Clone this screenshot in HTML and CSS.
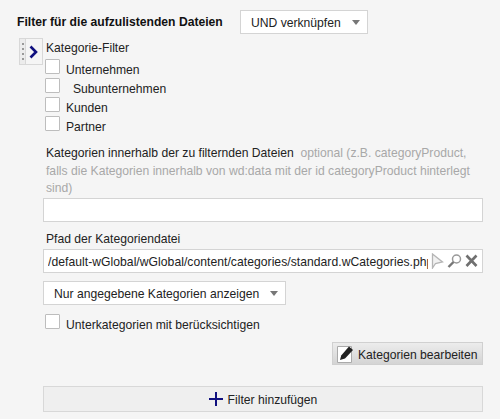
FILE: index.html
```html
<!DOCTYPE html>
<html lang="de">
<head>
<meta charset="utf-8">
<title>Filter</title>
<link rel="stylesheet" href="styles.css">
</head>
<body>
<div class="page">
  <div class="head">
    <strong class="head-title">Filter für die aufzulistenden Dateien</strong>
    <div class="select select-und"><span>UND verknüpfen</span><i class="caret"></i></div>
  </div>
  <div class="filter">
    <div class="handle">
      <div class="grip"><b></b><b></b><b></b><b></b></div>
      <div class="toggle"><svg width="10" height="14" viewBox="0 0 10 14"><path d="M1.500 1.500 7 7l-5.500 5.500" fill="none" stroke="#10107f" stroke-width="2.600"/></svg></div>
    </div>
    <div class="cats">
      <div class="cats-title">Kategorie-Filter</div>
      <div class="check"><i class="box"></i><span>Unternehmen</span></div>
      <div class="check check-sub"><i class="box"></i><span>Subunternehmen</span></div>
      <div class="check"><i class="box"></i><span>Kunden</span></div>
      <div class="check"><i class="box"></i><span>Partner</span></div>
    </div>
  </div>
  <div class="form">
    <div class="label-long">Kategorien innerhalb der zu filternden Dateien <span class="hint">&nbsp;optional (z.B. categoryProduct, falls die Kategorien innerhalb von wd:data mit der id categoryProduct hinterlegt sind)</span></div>
    <div class="input"></div>
    <div class="label-path">Pfad der Kategoriendatei</div>
    <div class="input input-path">
      <span class="path-text">/default-wGlobal/wGlobal/content/categories/standard.wCategories.php</span>
      <svg class="tool" width="13" height="16" viewBox="0 0 13 16"><path d="M1.500 1 11.500 9 4.500 10.500 1.500 15Z" fill="#f1f1f1" stroke="#b5b5b5" stroke-width="1.300"/></svg>
      <svg class="tool" width="15" height="16" viewBox="0 0 15 16"><circle cx="9.500" cy="6" r="4" fill="#fff" stroke="#999" stroke-width="1.500"/><path d="M6.500 9 1.500 14" stroke="#777" stroke-width="2.400"/></svg>
      <svg class="tool" width="13" height="16" viewBox="0 0 13 16"><path d="M1.500 2.500 11.500 13M11.500 2.500 1.500 13" stroke="#707070" stroke-width="2.600"/></svg>
    </div>
    <div class="select select-kat"><span>Nur angegebene Kategorien anzeigen</span><i class="caret"></i></div>
    <div class="check check-unter"><i class="box"></i><span>Unterkategorien mit berücksichtigen</span></div>
    <div class="actions">
      <div class="btn-edit">
        <svg width="17" height="18" viewBox="0 0 17 18"><path d="M.5 1.500h14v16H.5z" fill="#fff" stroke="#aaa"/><path d="M3 15l1.200-4.500L12 1.500l4 3.500-8 8.500z" fill="#222"/></svg>
        <span>Kategorien bearbeiten</span>
      </div>
    </div>
    <div class="btn-add">
      <svg width="14" height="14" viewBox="0 0 14 14"><path d="M7 0v14M0 7h14" stroke="#10107f" stroke-width="2"/></svg>
      <span>Filter hinzufügen</span>
    </div>
  </div>
</div>
</body>
</html>
```
FILE: styles.css
```css
* { box-sizing: border-box; }
html, body { margin: 0; padding: 0; }
body {
  width: 500px;
  height: 419px;
  overflow: hidden;
  background: #f5f5f5;
  font: 12.150px/17.500px "Liberation Sans", Arial, sans-serif;
  color: #222;
}
.page { padding: 10px 17px 0 17px; }
.head { display: flex; align-items: center; gap: 18px; height: 24px; }
.head-title { font-weight: 700; color: #111; width: 205px; white-space: nowrap; padding-top: 2px; }
.select {
  display: flex;
  align-items: center;
  justify-content: space-between;
  background: #fff;
  border: 1px solid #d4d4d4;
  height: 24px;
  padding: 0 7px 0 10px;
  white-space: nowrap;
}
.select span { padding-top: 4px; }
.select-und { width: 128px; }
.select-kat { width: 243px; margin-top: 8px; }
.caret {
  width: 0; height: 0;
  border-left: 4px solid transparent;
  border-right: 4px solid transparent;
  border-top: 5px solid #777;
}
.filter { display: flex; align-items: flex-start; margin-top: 4px; padding-left: 2px; gap: 2px; }
.handle { display: flex; width: 24px; height: 27px; background: #ececec; border: 1px solid #d8d8d8; }
.grip { width: 6px; border-right: 1px solid #d8d8d8; display: flex; flex-direction: column; align-items: center; justify-content: center; gap: 3px; flex: none; }
.grip b { width: 2px; height: 2px; background: #999; }
.toggle { flex: 1; display: flex; align-items: center; justify-content: center; background: #f5f5f5; }
.cats-title { height: 21px; margin-left: 1px; padding-top: 2px; }
.check { display: flex; align-items: flex-start; gap: 6px; height: 19px; }
.check span { padding-top: 3px; }
.check-sub span { padding-left: 7px; }
.box { display: block; width: 15px; height: 15px; background: #fff; border: 1px solid #bdbdbd; border-radius: 1px; flex: none; }
.form { margin-left: 26px; margin-top: 10px; }
.label-long { margin-left: 3px; }
.hint { color: #a8a8a8; }
.input { background: #fff; border: 1px solid #d4d4d4; height: 24px; width: 440px; }
.label-path { margin: 9px 0 1px 3px; }
.input-path { display: flex; align-items: center; padding: 0 4px 0 4px; gap: 3px; }
.path-text { flex: 1; overflow: hidden; white-space: nowrap; min-width: 0; letter-spacing: .04px; padding-top: 3px; }
.tool { flex: none; }
.check-unter { margin: 9px 0 0 2px; }
.actions { display: flex; justify-content: flex-end; margin-top: 9px; }
.btn-edit {
  display: flex; align-items: center; gap: 4px;
  width: 151px; height: 23px; padding-left: 4px;
  background: linear-gradient(#ececec, #d4d4d4);
  border: 1px solid #d0d0d0;
  white-space: nowrap;
}
.btn-edit span { padding-top: 4px; }
.btn-add {
  display: flex; align-items: center; justify-content: center; gap: 5px;
  margin-top: 21px; height: 26px; width: 440px;
  background: #efefef;
  border: 1px solid #d8d8d8;
}
.btn-add span { padding-top: 4px; }
```
